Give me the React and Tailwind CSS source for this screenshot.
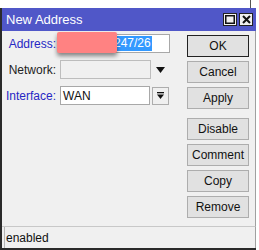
import React from 'react';

const font = { fontFamily: '"Liberation Sans", Arial, sans-serif' };

const Btn = ({ label, primary }) => (
  <div
    className={`h-[22px] w-[62px] flex items-center justify-center bg-[#e1e1e1] text-[12px] text-[#111] border ${primary ? 'border-[#222]' : 'border-[#adadad]'}`}
  >
    {label}
  </div>
);

const TitleBox = ({ children }) => (
  <div className="w-[14px] h-[13px] bg-[#f0f0f0] border border-[#222] flex items-center justify-center">
    {children}
  </div>
);

export default function App() {
  return (
    <div className="w-[259px] h-[250px] bg-white flex flex-col overflow-hidden" style={font}>
      <div className="h-[8px] bg-white flex">
        <div className="flex-1" />
        <div className="w-[1px] bg-[#555] mr-[8px]" />
      </div>
      <div className="flex-1 flex flex-col border-l-2 border-b-2 border-[#2a2a2a] mr-[3px]">
        {/* title bar */}
        <div className="h-[23px] bg-[#5057c8] flex items-center pl-[4px] pr-[2px]">
          <span className="text-white text-[13px] flex-1">New Address</span>
          <div className="flex gap-[2px] mr-[1px]">
            <TitleBox>
              <svg width="10" height="9" viewBox="0 0 10 9">
                <rect x="0.75" y="0.75" width="8.5" height="7.5" fill="none" stroke="#111" strokeWidth="1.5" />
              </svg>
            </TitleBox>
            <TitleBox>
              <svg width="9" height="9" viewBox="0 0 9 9">
                <path d="M1 1 L8 8 M8 1 L1 8" stroke="#111" strokeWidth="2" />
              </svg>
            </TitleBox>
          </div>
        </div>

        {/* body */}
        <div className="flex-1 bg-[#f0f0f0] flex border-r border-[#a0a0a0]">
          <div className="w-[181px] flex flex-col gap-[7px] pt-[3px]">
            <div className="h-[19px] flex items-center relative">
              <span className="w-[58px] text-right pr-[4px] text-[12px] text-[#2727c4]">Address:</span>
              <div className="w-[110px] h-[19px] bg-white border border-[#a8a8a8] flex items-center">
                <span className="ml-[52px] bg-[#3399ff] text-white text-[12px] leading-[15px] px-[1px]">247/26</span>
              </div>
              <div className="absolute left-[55px] top-[-2px] w-[60px] h-[21px] bg-[#ff8282] rounded-[2px] shadow-[0_3px_4px_rgba(0,0,0,0.45)]" />
            </div>
            <div className="h-[19px] flex items-center">
              <span className="w-[58px] text-right pr-[4px] text-[12px] text-[#222]">Network:</span>
              <div className="w-[91px] h-[19px] bg-[#f0f0f0] border border-[#bdbdbd]" />
              <svg className="ml-[5px]" width="9" height="6" viewBox="0 0 9 6">
                <path d="M0 0 H9 L4.5 6 Z" fill="#111" />
              </svg>
            </div>
            <div className="h-[19px] flex items-center">
              <span className="w-[58px] text-right pr-[4px] text-[12px] text-[#2727c4]">Interface:</span>
              <div className="w-[90px] h-[19px] bg-white border border-[#a8a8a8] flex items-center pl-[2px] text-[12px] text-[#111]">
                WAN
              </div>
              <div className="ml-[2px] w-[17px] h-[18px] bg-[#f0f0f0] border border-[#adadad] flex items-center justify-center">
                <svg width="7" height="7" viewBox="0 0 7 7">
                  <rect x="0" y="0" width="7" height="1.3" fill="#111" />
                  <path d="M0 2.5 H7 L3.5 7 Z" fill="#111" />
                </svg>
              </div>
            </div>
          </div>
          <div className="flex flex-col pt-[4px] pl-[4px]">
            <div className="flex flex-col gap-[4px]">
              <Btn label="OK" primary />
              <Btn label="Cancel" />
              <Btn label="Apply" />
            </div>
            <div className="flex flex-col gap-[4px] mt-[9px]">
              <Btn label="Disable" />
              <Btn label="Comment" />
              <Btn label="Copy" />
              <Btn label="Remove" />
            </div>
          </div>
        </div>

        {/* status bar */}
        <div className="h-[22px] bg-[#f0f0f0] border-t border-[#c8c8c8] border-r border-r-[#a0a0a0] flex items-center">
          <div className="h-full border-l border-[#b5b5b5] ml-[2px] pl-[1px] flex items-center text-[12px] text-[#111]">
            enabled
          </div>
        </div>
      </div>
    </div>
  );
}
